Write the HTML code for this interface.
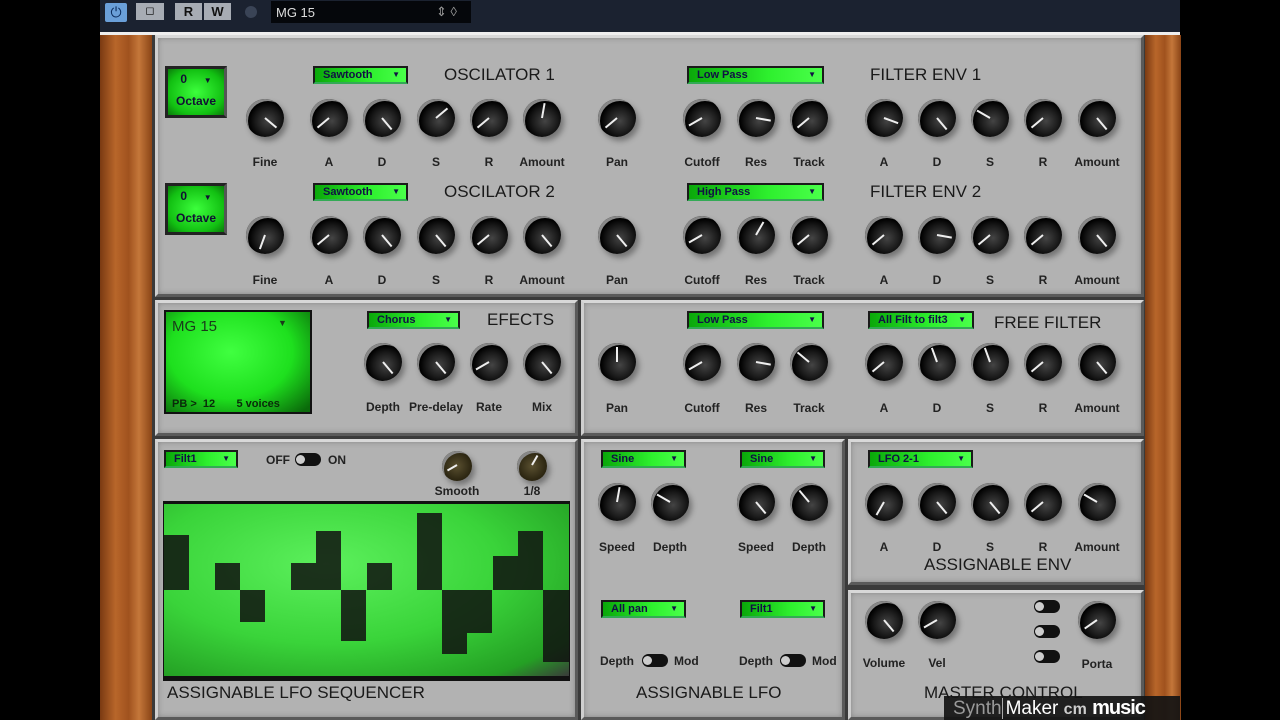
<!DOCTYPE html>
<html><head><style>
*{margin:0;padding:0;box-sizing:border-box}
body{width:1280px;height:720px;background:#000;position:relative;overflow:hidden;font-family:"Liberation Sans",sans-serif}
.a{position:absolute}
.bar{left:100px;top:0;width:1080px;height:28px;background:#1b2230}
.wood{background:linear-gradient(90deg,#7a3a12,#b8662a 30%,#a0521e 55%,#c4773a 75%,#8a4416)}
.pn{background:#b2b2b2;border:3px solid #5a5a5a;border-top-color:#d8d8d8;border-left-color:#cfcfcf;box-shadow:inset 0 0 6px rgba(0,0,0,.25)}
.k{position:absolute;width:38px;height:38px;border-radius:50%;background:radial-gradient(circle at 58% 58%,#444 0,#1a1a1a 40%,#000 62%);box-shadow:3px 4px 6px rgba(0,0,0,.35),inset 3px 3px 0 -1px #888}
.k i{position:absolute;left:18px;top:4px;width:2px;height:15px;background:#eee;transform-origin:1px 15px}
.l{position:absolute;font-size:12px;font-weight:bold;color:#222;width:70px;text-align:center}
.t{position:absolute;font-size:17px;color:#1a1a1a}
.g{position:absolute;height:18px;background:linear-gradient(90deg,#0aa80a,#2ef02e 60%,#4aff4a);border:2px solid #1a1a1a;border-bottom-color:#3a5;font-size:11px;font-weight:bold;color:#114;padding-left:8px;line-height:14px}
.g:after{content:"▼";position:absolute;right:6px;font-size:8px;top:0}
.oct{position:absolute;width:62px;height:52px;background:radial-gradient(#3cff3c,#12c012 70%,#0a7a0a);border:3px solid #222;border-right-color:#555;font-size:12px;font-weight:bold;color:#113;text-align:center;line-height:20px}
.sq{position:absolute;background:#111;opacity:.85}
.sw{position:absolute;width:26px;height:13px;border-radius:7px;background:#111}
.sw:before{content:"";position:absolute;left:1px;top:2px;width:9px;height:9px;border-radius:50%;background:#ccc}
</style></head><body>
<div class="a bar"></div>
<div class="a" style="left:105px;top:3px;width:22px;height:19px;background:#6a9fd8;border-radius:2px;color:#0a2a5a;font-size:14px;text-align:center;line-height:19px">⏻</div>
<div class="a" style="left:136px;top:3px;width:28px;height:17px;background:#a7acb4;font-size:11px;text-align:center;line-height:17px">◻</div>
<div class="a" style="left:175px;top:3px;width:27px;height:17px;background:#a7acb4;font-weight:bold;font-size:13px;text-align:center;line-height:17px;color:#111">R</div>
<div class="a" style="left:204px;top:3px;width:27px;height:17px;background:#a7acb4;font-weight:bold;font-size:13px;text-align:center;line-height:17px;color:#111">W</div>
<div class="a" style="left:245px;top:6px;width:12px;height:12px;border-radius:50%;background:#3a4456"></div>
<div class="a" style="left:271px;top:1px;width:200px;height:22px;background:#05070b;color:#ddd;font-size:13px;padding:4px 0 0 5px">MG 15<span style="position:absolute;left:165px;top:3px;color:#999">⇕ ◊</span></div>
<div class="a" style="left:100px;top:28px;width:1080px;height:6px;background:#1b2230"></div>
<div class="a" style="left:100px;top:32px;width:1080px;height:3px;background:#eee"></div>
<div class="a wood" style="left:100px;top:35px;width:52px;height:685px"></div>
<div class="a wood" style="left:1145px;top:35px;width:36px;height:685px"></div>
<div class="a" style="left:152px;top:35px;width:993px;height:685px;background:#3a3a3a"></div>
<div class="a pn" style="left:155px;top:35px;width:989px;height:262px"></div>
<div class="a pn" style="left:155px;top:300px;width:423px;height:136px"></div>
<div class="a pn" style="left:581px;top:300px;width:563px;height:136px"></div>
<div class="a pn" style="left:155px;top:439px;width:423px;height:281px"></div>
<div class="a pn" style="left:581px;top:439px;width:264px;height:281px"></div>
<div class="a pn" style="left:848px;top:439px;width:296px;height:146px"></div>
<div class="a pn" style="left:848px;top:590px;width:296px;height:130px"></div>

<div class="oct" style="left:165px;top:66px">0 &nbsp;&nbsp;&nbsp;&nbsp;<span style="font-size:8px">▼</span><br>Octave</div>
<div class="oct" style="left:165px;top:183px">0 &nbsp;&nbsp;&nbsp;&nbsp;<span style="font-size:8px">▼</span><br>Octave</div>
<div class="g" style="left:313px;top:66px;width:95px">Sawtooth</div>
<div class="g" style="left:313px;top:183px;width:95px">Sawtooth</div>
<div class="g" style="left:687px;top:66px;width:137px">Low Pass</div>
<div class="g" style="left:687px;top:183px;width:137px">High Pass</div>
<div class="t" style="left:444px;top:65px">OSCILATOR 1</div>
<div class="t" style="left:444px;top:182px">OSCILATOR 2</div>
<div class="t" style="left:870px;top:65px">FILTER ENV 1</div>
<div class="t" style="left:870px;top:182px">FILTER ENV 2</div>

<div class="k" style="left:246px;top:99px"><i style="transform:rotate(130deg)"></i></div>
<div class="k" style="left:310px;top:99px"><i style="transform:rotate(-130deg)"></i></div>
<div class="k" style="left:363px;top:99px"><i style="transform:rotate(140deg)"></i></div>
<div class="k" style="left:417px;top:99px"><i style="transform:rotate(50deg)"></i></div>
<div class="k" style="left:470px;top:99px"><i style="transform:rotate(-130deg)"></i></div>
<div class="k" style="left:523px;top:99px"><i style="transform:rotate(10deg)"></i></div>
<div class="k" style="left:598px;top:99px"><i style="transform:rotate(-130deg)"></i></div>
<div class="k" style="left:683px;top:99px"><i style="transform:rotate(-120deg)"></i></div>
<div class="k" style="left:737px;top:99px"><i style="transform:rotate(100deg)"></i></div>
<div class="k" style="left:790px;top:99px"><i style="transform:rotate(-130deg)"></i></div>
<div class="k" style="left:865px;top:99px"><i style="transform:rotate(110deg)"></i></div>
<div class="k" style="left:918px;top:99px"><i style="transform:rotate(140deg)"></i></div>
<div class="k" style="left:971px;top:99px"><i style="transform:rotate(-60deg)"></i></div>
<div class="k" style="left:1024px;top:99px"><i style="transform:rotate(-130deg)"></i></div>
<div class="k" style="left:1078px;top:99px"><i style="transform:rotate(140deg)"></i></div>
<div class="k" style="left:246px;top:216px"><i style="transform:rotate(-160deg)"></i></div>
<div class="k" style="left:310px;top:216px"><i style="transform:rotate(-130deg)"></i></div>
<div class="k" style="left:363px;top:216px"><i style="transform:rotate(140deg)"></i></div>
<div class="k" style="left:417px;top:216px"><i style="transform:rotate(140deg)"></i></div>
<div class="k" style="left:470px;top:216px"><i style="transform:rotate(-130deg)"></i></div>
<div class="k" style="left:523px;top:216px"><i style="transform:rotate(140deg)"></i></div>
<div class="k" style="left:598px;top:216px"><i style="transform:rotate(140deg)"></i></div>
<div class="k" style="left:683px;top:216px"><i style="transform:rotate(-120deg)"></i></div>
<div class="k" style="left:737px;top:216px"><i style="transform:rotate(30deg)"></i></div>
<div class="k" style="left:790px;top:216px"><i style="transform:rotate(-130deg)"></i></div>
<div class="k" style="left:865px;top:216px"><i style="transform:rotate(-130deg)"></i></div>
<div class="k" style="left:918px;top:216px"><i style="transform:rotate(100deg)"></i></div>
<div class="k" style="left:971px;top:216px"><i style="transform:rotate(-130deg)"></i></div>
<div class="k" style="left:1024px;top:216px"><i style="transform:rotate(-130deg)"></i></div>
<div class="k" style="left:1078px;top:216px"><i style="transform:rotate(140deg)"></i></div>

<div class="l" style="left:230px;top:155px">Fine</div><div class="l" style="left:294px;top:155px">A</div><div class="l" style="left:347px;top:155px">D</div><div class="l" style="left:401px;top:155px">S</div><div class="l" style="left:454px;top:155px">R</div><div class="l" style="left:507px;top:155px">Amount</div><div class="l" style="left:582px;top:155px">Pan</div><div class="l" style="left:667px;top:155px">Cutoff</div><div class="l" style="left:721px;top:155px">Res</div><div class="l" style="left:774px;top:155px">Track</div><div class="l" style="left:849px;top:155px">A</div><div class="l" style="left:902px;top:155px">D</div><div class="l" style="left:955px;top:155px">S</div><div class="l" style="left:1008px;top:155px">R</div><div class="l" style="left:1062px;top:155px">Amount</div>
<div class="l" style="left:230px;top:273px">Fine</div><div class="l" style="left:294px;top:273px">A</div><div class="l" style="left:347px;top:273px">D</div><div class="l" style="left:401px;top:273px">S</div><div class="l" style="left:454px;top:273px">R</div><div class="l" style="left:507px;top:273px">Amount</div><div class="l" style="left:582px;top:273px">Pan</div><div class="l" style="left:667px;top:273px">Cutoff</div><div class="l" style="left:721px;top:273px">Res</div><div class="l" style="left:774px;top:273px">Track</div><div class="l" style="left:849px;top:273px">A</div><div class="l" style="left:902px;top:273px">D</div><div class="l" style="left:955px;top:273px">S</div><div class="l" style="left:1008px;top:273px">R</div><div class="l" style="left:1062px;top:273px">Amount</div>

<div class="a" style="left:164px;top:310px;width:148px;height:104px;background:radial-gradient(ellipse at 45% 40%,#40ff40,#1ee01e 55%,#0a6a0a 95%);border:2px solid #111;font-size:15px;color:#1a3a1a;padding:6px 0 0 6px">MG 15<span style="position:absolute;left:112px;top:6px;font-size:9px">▼</span><span style="position:absolute;left:6px;top:86px;font-size:11px;font-weight:bold;color:#0a2a0a">PB &gt; &nbsp;12 &nbsp;&nbsp;&nbsp;&nbsp;&nbsp;&nbsp;5 voices</span></div>
<div class="g" style="left:367px;top:311px;width:93px">Chorus</div>
<div class="t" style="left:487px;top:310px">EFECTS</div>
<div class="g" style="left:687px;top:311px;width:137px">Low Pass</div>
<div class="g" style="left:868px;top:311px;width:106px">All Filt to filt3</div>
<div class="t" style="left:994px;top:313px">FREE FILTER</div>
<div class="k" style="left:364px;top:343px"><i style="transform:rotate(140deg)"></i></div>
<div class="k" style="left:417px;top:343px"><i style="transform:rotate(140deg)"></i></div>
<div class="k" style="left:470px;top:343px"><i style="transform:rotate(-120deg)"></i></div>
<div class="k" style="left:523px;top:343px"><i style="transform:rotate(140deg)"></i></div>
<div class="k" style="left:598px;top:343px"><i style="transform:rotate(0deg)"></i></div>
<div class="k" style="left:683px;top:343px"><i style="transform:rotate(-120deg)"></i></div>
<div class="k" style="left:737px;top:343px"><i style="transform:rotate(100deg)"></i></div>
<div class="k" style="left:790px;top:343px"><i style="transform:rotate(-50deg)"></i></div>
<div class="k" style="left:865px;top:343px"><i style="transform:rotate(-130deg)"></i></div>
<div class="k" style="left:918px;top:343px"><i style="transform:rotate(-20deg)"></i></div>
<div class="k" style="left:971px;top:343px"><i style="transform:rotate(-20deg)"></i></div>
<div class="k" style="left:1024px;top:343px"><i style="transform:rotate(-130deg)"></i></div>
<div class="k" style="left:1078px;top:343px"><i style="transform:rotate(140deg)"></i></div>
<div class="l" style="left:348px;top:400px">Depth</div><div class="l" style="left:401px;top:400px">Pre-delay</div><div class="l" style="left:454px;top:400px">Rate</div><div class="l" style="left:507px;top:400px">Mix</div><div class="l" style="left:582px;top:401px">Pan</div><div class="l" style="left:667px;top:401px">Cutoff</div><div class="l" style="left:721px;top:401px">Res</div><div class="l" style="left:774px;top:401px">Track</div><div class="l" style="left:849px;top:401px">A</div><div class="l" style="left:902px;top:401px">D</div><div class="l" style="left:955px;top:401px">S</div><div class="l" style="left:1008px;top:401px">R</div><div class="l" style="left:1062px;top:401px">Amount</div>

<div class="g" style="left:164px;top:450px;width:74px">Filt1</div>
<div class="a" style="left:266px;top:453px;font-size:12px;font-weight:bold;color:#222">OFF</div>
<div class="sw" style="left:295px;top:453px"></div>
<div class="a" style="left:328px;top:453px;font-size:12px;font-weight:bold;color:#222">ON</div>
<div class="k" style="left:442px;top:451px;width:30px;height:30px;background:radial-gradient(#5a5030,#2a2410 70%)"><i style="left:14px;top:3px;height:11px;transform-origin:1px 11px;transform:rotate(-120deg)"></i></div>
<div class="k" style="left:517px;top:451px;width:30px;height:30px;background:radial-gradient(#5a5030,#2a2410 70%)"><i style="left:14px;top:3px;height:11px;transform-origin:1px 11px;transform:rotate(30deg)"></i></div>
<div class="l" style="left:422px;top:484px">Smooth</div><div class="l" style="left:497px;top:484px">1/8</div>
<div class="a" style="left:163px;top:501px;width:407px;height:180px;background:#111"></div>
<div class="a" style="left:164px;top:504px;width:405px;height:172px;background:radial-gradient(ellipse at 40% 35%,#5cf05c,#3ad43a 50%,#24a024 85%,#3a3a3a 100%)"></div>
<div class="sq" style="left:164px;top:535px;width:25px;height:55px"></div>
<div class="sq" style="left:215px;top:563px;width:25px;height:27px"></div>
<div class="sq" style="left:240px;top:590px;width:25px;height:32px"></div>
<div class="sq" style="left:291px;top:563px;width:25px;height:27px"></div>
<div class="sq" style="left:316px;top:531px;width:25px;height:59px"></div>
<div class="sq" style="left:341px;top:590px;width:25px;height:51px"></div>
<div class="sq" style="left:367px;top:563px;width:25px;height:27px"></div>
<div class="sq" style="left:417px;top:513px;width:25px;height:77px"></div>
<div class="sq" style="left:442px;top:590px;width:25px;height:64px"></div>
<div class="sq" style="left:467px;top:590px;width:25px;height:43px"></div>
<div class="sq" style="left:493px;top:556px;width:25px;height:34px"></div>
<div class="sq" style="left:518px;top:531px;width:25px;height:59px"></div>
<div class="sq" style="left:543px;top:590px;width:26px;height:72px"></div>
<div class="t" style="left:167px;top:683px">ASSIGNABLE LFO SEQUENCER</div>

<div class="g" style="left:601px;top:450px;width:85px">Sine</div>
<div class="g" style="left:740px;top:450px;width:85px">Sine</div>
<div class="k" style="left:598px;top:483px"><i style="transform:rotate(10deg)"></i></div>
<div class="k" style="left:651px;top:483px"><i style="transform:rotate(-60deg)"></i></div>
<div class="k" style="left:737px;top:483px"><i style="transform:rotate(140deg)"></i></div>
<div class="k" style="left:790px;top:483px"><i style="transform:rotate(-40deg)"></i></div>
<div class="l" style="left:582px;top:540px">Speed</div><div class="l" style="left:635px;top:540px">Depth</div><div class="l" style="left:721px;top:540px">Speed</div><div class="l" style="left:774px;top:540px">Depth</div>
<div class="g" style="left:601px;top:600px;width:85px">All pan</div>
<div class="g" style="left:740px;top:600px;width:85px">Filt1</div>
<div class="a" style="left:600px;top:654px;font-size:12px;font-weight:bold;color:#222">Depth</div>
<div class="sw" style="left:642px;top:654px"></div>
<div class="a" style="left:674px;top:654px;font-size:12px;font-weight:bold;color:#222">Mod</div>
<div class="a" style="left:739px;top:654px;font-size:12px;font-weight:bold;color:#222">Depth</div>
<div class="sw" style="left:780px;top:654px"></div>
<div class="a" style="left:812px;top:654px;font-size:12px;font-weight:bold;color:#222">Mod</div>
<div class="t" style="left:636px;top:683px">ASSIGNABLE LFO</div>

<div class="g" style="left:868px;top:450px;width:105px">LFO 2-1</div>
<div class="k" style="left:865px;top:483px"><i style="transform:rotate(-150deg)"></i></div>
<div class="k" style="left:918px;top:483px"><i style="transform:rotate(140deg)"></i></div>
<div class="k" style="left:971px;top:483px"><i style="transform:rotate(140deg)"></i></div>
<div class="k" style="left:1024px;top:483px"><i style="transform:rotate(-130deg)"></i></div>
<div class="k" style="left:1078px;top:483px"><i style="transform:rotate(-60deg)"></i></div>
<div class="l" style="left:849px;top:540px">A</div><div class="l" style="left:902px;top:540px">D</div><div class="l" style="left:955px;top:540px">S</div><div class="l" style="left:1008px;top:540px">R</div><div class="l" style="left:1062px;top:540px">Amount</div>
<div class="t" style="left:924px;top:555px">ASSIGNABLE ENV</div>

<div class="k" style="left:865px;top:601px"><i style="transform:rotate(140deg)"></i></div>
<div class="k" style="left:918px;top:601px"><i style="transform:rotate(-120deg)"></i></div>
<div class="k" style="left:1078px;top:601px"><i style="transform:rotate(-125deg)"></i></div>
<div class="sw" style="left:1034px;top:600px"></div>
<div class="sw" style="left:1034px;top:625px"></div>
<div class="sw" style="left:1034px;top:650px"></div>
<div class="l" style="left:849px;top:656px">Volume</div><div class="l" style="left:902px;top:656px">Vel</div><div class="l" style="left:1062px;top:657px">Porta</div>
<div class="t" style="left:924px;top:683px">MASTER CONTROL</div>
<div class="a" style="left:944px;top:696px;width:236px;height:24px;background:rgba(20,20,20,.92);font-size:19px;color:#999;padding:1px 0 0 9px;white-space:nowrap">Synth<span style="color:#fff;border-left:1px solid #aaa;padding-left:3px">Maker</span> <b style="color:#ccc;font-size:16px">cm</b> <b style="color:#fff;font-size:20px;letter-spacing:-1px">music</b></div>
</body></html>
